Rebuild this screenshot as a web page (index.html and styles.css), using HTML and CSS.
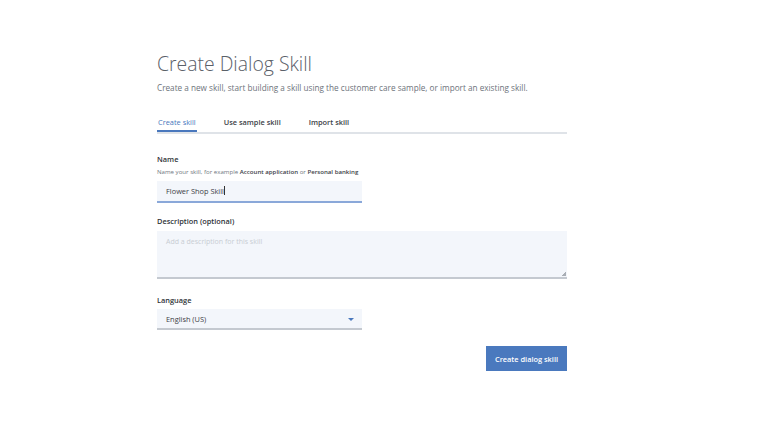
FILE: index.html
```html
<!DOCTYPE html>
<html>
<head>
<meta charset="utf-8">
<link rel="stylesheet" href="styles.css">
</head>
<body>
<main class="page">
  <h1 class="title">Create Dialog Skill</h1>
  <p class="subtitle">Create a new skill, start building a skill using the customer care sample, or import an existing skill.</p>
  <nav class="tabs">
    <span class="tab active">Create skill</span>
    <span class="tab">Use sample skill</span>
    <span class="tab">Import skill</span>
  </nav>
  <div class="field name-field">
    <div class="label">Name</div>
    <div class="helper">Name your skill, for example <b>Account application</b> or <b>Personal banking</b></div>
    <div class="input focused">Flower Shop Skill<span class="caret"></span></div>
  </div>
  <div class="field desc-field">
    <div class="label">Description (optional)</div>
    <div class="textarea"><span class="placeholder">Add a description for this skill</span><span class="grip"></span></div>
  </div>
  <div class="field lang-field">
    <div class="label">Language</div>
    <div class="input select">English (US)<span class="arrow"></span></div>
  </div>
  <div class="actions">
    <button class="primary">Create dialog skill</button>
  </div>
</main>
</body>
</html>
```
FILE: styles.css
```css
html, body { margin: 0; padding: 0; background: #ffffff; }
body { font-family: "Open Sans", "Noto Sans", sans-serif; color: #3d4147; }
.page { margin-left: 157px; width: 410px; padding-top: 50px; }
.title { margin: 0; font-weight: 300; font-size: 19.4px; line-height: 27px; color: #5a6068; }
.subtitle { margin: 5px 0 0; font-size: 8.2px; line-height: 12px; color: #6d737b; }
.tabs { display: flex; margin-top: 20px; border-bottom: 2px solid #dfe3e8; height: 18px; }
.tab { font-size: 7.4px; font-weight: 600; color: #3d4147; line-height: 16px; margin-right: 26px; padding: 0 1px; }
.tab.active { color: #4a78bd; font-weight: 500; border-bottom: 2px solid #4a78bd; margin-bottom: -2px; height: 16px; padding-right: 1px; }
.field { margin-top: 13px; }
.name-field { margin-top: 20px; }
.lang-field { margin-top: 16px; }
.label { font-size: 7.4px; font-weight: 600; line-height: 10px; color: #2f3338; }
.helper { font-size: 6.1px; line-height: 9px; color: #707780; margin-top: 3px; }
.helper b { color: #3d4147; font-weight: 600; }
.input { position: relative; margin-top: 4px; width: 205px; height: 20px; box-sizing: border-box; background: #f3f6fb; border-bottom: 1px solid #b9bfc7; font-size: 7.4px; line-height: 19px; padding-left: 9px; color: #3d4147; }
.name-field .input { margin-top: 5px; }
.input.focused { border-bottom: 2px solid #8aa8d9; line-height: 20px; height: 22px; }
.caret { display: inline-block; width: 1px; height: 9px; background: #333; vertical-align: -1px; }
.textarea { position: relative; margin-top: 5px; width: 410px; height: 48px; box-sizing: border-box; background: #f3f6fb; border-bottom: 2px solid #c4c9d0; padding: 6px 9px; font-size: 7px; line-height: 10px; }
.placeholder { font-size: 7px; color: #c8cdd3; }
.grip { position: absolute; right: 1px; bottom: 1px; width: 4px; height: 4px; background: linear-gradient(135deg, transparent 50%, #a9aeb5 50%); }
.select { margin-top: 4px; height: 21px; line-height: 20px; border-bottom: 2px solid #c4c9d0; }
.arrow { position: absolute; right: 8px; top: 9px; width: 0; height: 0; border-left: 3px solid transparent; border-right: 3px solid transparent; border-top: 3px solid #4a78bd; }
.actions { display: flex; justify-content: flex-end; margin-top: 16px; }
.primary { width: 81px; height: 25px; background: #4a79be; color: #ffffff; border: 0; font-family: "Open Sans", "Noto Sans", sans-serif; font-size: 7.4px; font-weight: 600; padding: 0; }
```
